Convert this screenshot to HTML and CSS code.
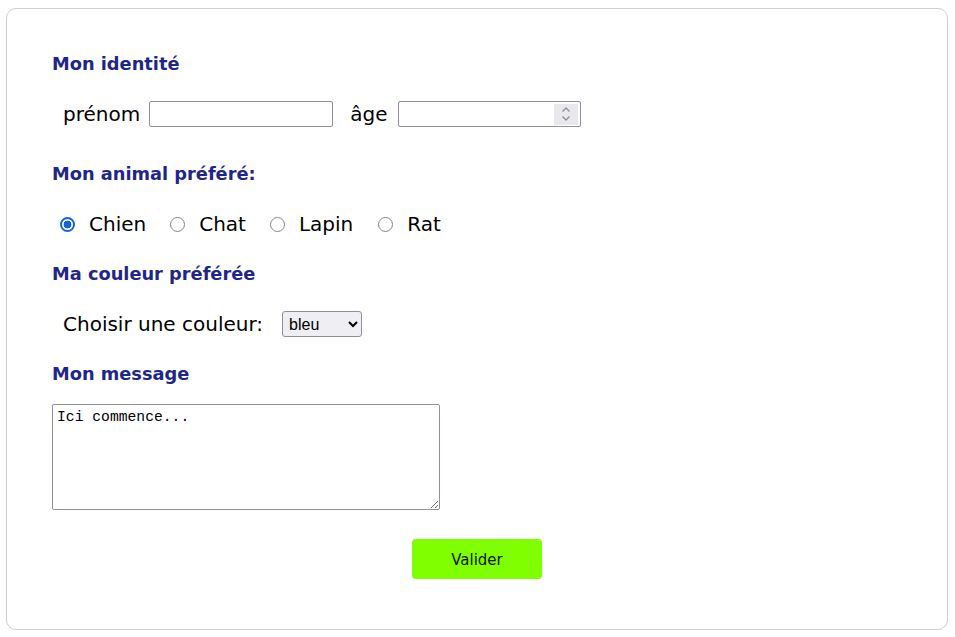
FILE: index.html
```html
<!DOCTYPE html>
<html lang="fr">
<head>
<meta charset="utf-8">
<title>Formulaire</title>
<link rel="stylesheet" href="styles.css">
</head>
<body>
<form class="card">
  <h2 class="title">Mon identité</h2>
  <div class="row row-id">
    <label class="lbl" for="prenom">prénom</label>
    <input class="txt" id="prenom" type="text">
    <label class="lbl lbl-age" for="age">âge</label>
    <div class="numbox">
      <input class="num" id="age" type="number">
      <span class="spin">
        <svg width="10" height="16" viewBox="0 0 10 16" aria-hidden="true">
          <path d="M1.5 5.5 L5 2 L8.5 5.5" fill="none" stroke="#8d8d96" stroke-width="1.3"/>
          <path d="M1.5 10.5 L5 14 L8.5 10.5" fill="none" stroke="#8d8d96" stroke-width="1.3"/>
        </svg>
      </span>
    </div>
  </div>

  <h2 class="title t2">Mon animal préféré:</h2>
  <div class="row row-radio">
    <label class="opt"><input type="radio" name="animal" checked>Chien</label>
    <label class="opt"><input type="radio" name="animal">Chat</label>
    <label class="opt"><input type="radio" name="animal">Lapin</label>
    <label class="opt"><input type="radio" name="animal">Rat</label>
  </div>

  <h2 class="title t3">Ma couleur préférée</h2>
  <div class="row row-sel">
    <label class="lbl" for="couleur">Choisir une couleur:</label>
    <select id="couleur" class="sel">
      <option>bleu</option>
      <option>rouge</option>
      <option>vert</option>
    </select>
  </div>

  <h2 class="title t3">Mon message</h2>
  <div class="msgwrap">
    <textarea class="msg">Ici commence...</textarea>
  </div>

  <div class="actions">
    <button type="button" class="btn">Valider</button>
  </div>
</form>
</body>
</html>
```
FILE: styles.css
```css
html, body {
  margin: 0;
  padding: 0;
  background: #ffffff;
}
body {
  padding: 8px 6px 8px 6px;
  font-family: "DejaVu Sans", Verdana, sans-serif;
  color: #000;
}
.card {
  box-sizing: border-box;
  width: 942px;
  height: 622px;
  border: 1px solid #cfcfcf;
  border-radius: 10px;
  padding: 43px 45px 0 45px;
  display: flex;
  flex-direction: column;
  align-items: flex-start;
}
.title {
  margin: 0;
  height: 21px;
  line-height: 22px;
  font-size: 17.8px;
  font-weight: bold;
  color: #1f268a;
  padding-top: 1px;
}
.t2 { margin-top: 34px; }
.t3 { margin-top: 24px; }
.row {
  margin-top: 26px;
  height: 28px;
  display: flex;
  align-items: center;
  font-size: 20px;
  padding-left: 11px;
}
.lbl { margin-right: 9px; }
.lbl-age { margin-left: 17px; margin-right: 11px; }
.txt {
  box-sizing: border-box;
  height: 26px;
  width: 184px;
  margin: 0;
  border: 1px solid #8f8f9d;
  border-radius: 2px;
  font-size: 13px;
}
.numbox {
  box-sizing: border-box;
  width: 183px;
  height: 26px;
  border: 1px solid #8f8f9d;
  border-radius: 2px;
  display: flex;
  align-items: center;
  padding-right: 2px;
}
.num {
  flex: 1;
  min-width: 0;
  height: 100%;
  border: none;
  outline: none;
  padding: 0 4px;
  font-size: 13px;
  background: transparent;
  -moz-appearance: textfield;
}
.num::-webkit-inner-spin-button,
.num::-webkit-outer-spin-button {
  -webkit-appearance: none;
  margin: 0;
}
.spin {
  width: 24px;
  height: 21px;
  background: #e9e9ed;
  display: flex;
  align-items: center;
  justify-content: center;
}
.row-radio { padding-left: 8px; }
.opt {
  display: flex;
  align-items: center;
  margin-right: 24px;
}
.opt:nth-child(3) { margin-right: 25px; }
.opt input {
  -webkit-appearance: none;
  appearance: none;
  box-sizing: border-box;
  width: 15px;
  height: 15px;
  margin: 0 14px 0 0;
  border: 1.6px solid #85858f;
  border-radius: 50%;
  background: #fff;
}
.opt input:checked {
  border: 2px solid #1565d8;
  background: radial-gradient(circle, #1565d8 0 3.6px, #fff 4.2px);
}
.sel {
  margin-left: 10px;
  box-sizing: border-box;
  width: 80px;
  height: 26px;
  font-family: "Liberation Sans", Arial, sans-serif;
  font-size: 16px;
  border: 1px solid #8f8f9d;
  border-radius: 3px;
  background: #efeff3;
  color: #000;
  padding-left: 2px;
}
.msgwrap {
  margin-top: 20px;
  display: flex;
}
.msg {
  box-sizing: border-box;
  width: 388px;
  height: 106px;
  margin: 0;
  border: 1px solid #8f8f9d;
  border-radius: 2px;
  padding: 4px 4px;
  font-family: "Liberation Mono", monospace;
  font-size: 14.7px;
  line-height: 17px;
  resize: both;
}
.actions {
  align-self: stretch;
  display: flex;
  justify-content: center;
  margin-top: 29px;
}
.btn {
  width: 130px;
  height: 40px;
  border: none;
  border-radius: 4px;
  background: #80ff00;
  font-family: "DejaVu Sans", Tahoma, sans-serif;
  font-size: 15px;
  color: #111;
  padding-top: 3px;
}
```
